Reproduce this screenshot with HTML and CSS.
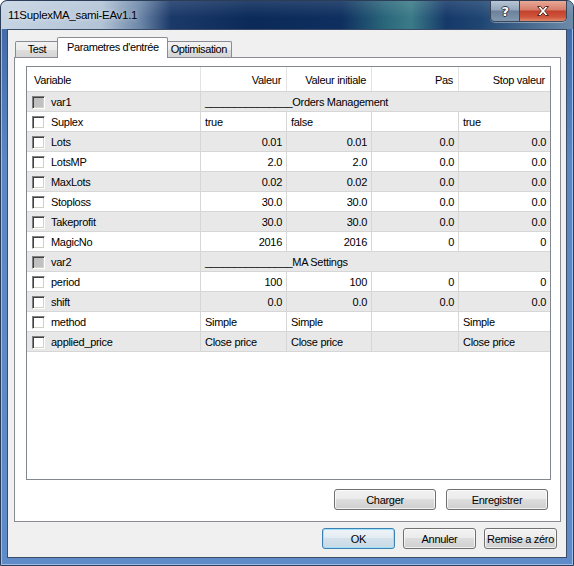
FILE: index.html
```html
<!DOCTYPE html>
<html lang="fr">
<head>
  <meta charset="UTF-8" />
  <meta name="viewport" content="width=device-width, initial-scale=1.0" />
  <title>11SuplexMA_sami-EAv1.1</title>
  <link rel="stylesheet" href="styles.css">
</head>
<body>
  <div class="window">
    <div class="titlebar">
      <span class="title">11SuplexMA_sami-EAv1.1</span>
      <div class="caption">
        <span class="cap help">?</span>
        <span class="cap close">
          <svg width="14" height="12" viewBox="0 0 14 12">
            <path d="M1.5 1.5h3.2l2.3 2.8 2.3-2.8h3.2l-3.8 4.5 3.8 4.5h-3.2l-2.3-2.8-2.3 2.8h-3.2l3.8-4.5z" fill="#fff" stroke="#5a2a24" stroke-width="1" stroke-linejoin="round"/>
          </svg>
        </span>
      </div>
    </div>

    <div class="client">
      <div class="tabs">
        <span class="tab first">Test</span>
        <span class="tab active">Parametres d'entrée</span>
        <span class="tab">Optimisation</span>
      </div>

      <div class="panel">
        <div class="grid">
          <div class="row head">
            <span>Variable</span>
            <span class="num">Valeur</span>
            <span class="num">Valeur initiale</span>
            <span class="num">Pas</span>
            <span class="num">Stop valeur</span>
          </div>
          <div class="row sep">
            <span class="var"><i class="check off"></i>var1</span>
            <span class="wide">_______________Orders Management</span>
          </div>
          <div class="row">
            <span class="var"><i class="check"></i>Suplex</span>
            <span>true</span><span>false</span><span></span><span>true</span>
          </div>
          <div class="row">
            <span class="var"><i class="check"></i>Lots</span>
            <span class="num">0.01</span><span class="num">0.01</span><span class="num">0.0</span><span class="num">0.0</span>
          </div>
          <div class="row">
            <span class="var"><i class="check"></i>LotsMP</span>
            <span class="num">2.0</span><span class="num">2.0</span><span class="num">0.0</span><span class="num">0.0</span>
          </div>
          <div class="row">
            <span class="var"><i class="check"></i>MaxLots</span>
            <span class="num">0.02</span><span class="num">0.02</span><span class="num">0.0</span><span class="num">0.0</span>
          </div>
          <div class="row">
            <span class="var"><i class="check"></i>Stoploss</span>
            <span class="num">30.0</span><span class="num">30.0</span><span class="num">0.0</span><span class="num">0.0</span>
          </div>
          <div class="row">
            <span class="var"><i class="check"></i>Takeprofit</span>
            <span class="num">30.0</span><span class="num">30.0</span><span class="num">0.0</span><span class="num">0.0</span>
          </div>
          <div class="row">
            <span class="var"><i class="check"></i>MagicNo</span>
            <span class="num">2016</span><span class="num">2016</span><span class="num">0</span><span class="num">0</span>
          </div>
          <div class="row sep">
            <span class="var"><i class="check off"></i>var2</span>
            <span class="wide">_______________MA Settings</span>
          </div>
          <div class="row">
            <span class="var"><i class="check"></i>period</span>
            <span class="num">100</span><span class="num">100</span><span class="num">0</span><span class="num">0</span>
          </div>
          <div class="row">
            <span class="var"><i class="check"></i>shift</span>
            <span class="num">0.0</span><span class="num">0.0</span><span class="num">0.0</span><span class="num">0.0</span>
          </div>
          <div class="row">
            <span class="var"><i class="check"></i>method</span>
            <span>Simple</span><span>Simple</span><span></span><span>Simple</span>
          </div>
          <div class="row">
            <span class="var"><i class="check"></i>applied_price</span>
            <span>Close price</span><span>Close price</span><span></span><span>Close price</span>
          </div>
        </div>

        <div class="panel-btns">
          <button>Charger</button>
          <button>Enregistrer</button>
        </div>
      </div>

      <div class="dialog-btns">
        <button class="default">OK</button>
        <button>Annuler</button>
        <button>Remise a zéro</button>
      </div>
    </div>
  </div>
</body>
</html>
```

FILE: styles.css
```css
body {
  margin: 0;
  background: #fff;
  font-family: "Liberation Sans", Arial, sans-serif;
  font-size: 11px;
  letter-spacing: -0.3px;
  color: #000;
}

.window {
  width: 574px;
  height: 566px;
  box-sizing: border-box;
  border: 1px solid #2b3d57;
  border-radius: 7px 7px 0 0;
  background: linear-gradient(#3d67a3, #5b87c5 160px, #5f8bc9);
  box-shadow: inset 1px 0 #9fbde6, inset -1px 0 #9fbde6, inset 0 -1px #9fbde6;
  display: flex;
  flex-direction: column;
  overflow: hidden;
}

.titlebar {
  height: 28px;
  display: flex;
  align-items: flex-start;
  background:
    linear-gradient(rgba(255, 255, 255, 0.12), rgba(255, 255, 255, 0) 60%),
    linear-gradient(90deg, #c6d4e3 0, #b3c4d7 100px, #6a85a7 140px, #1b3969 170px,
      #0b2a5a 250px, #0e2f5f 340px, #2b687b 385px, #3b7b88 410px, #16396a 445px,
      #1f4672 480px, #6e8ba9 572px);
  border-radius: 6px 6px 0 0;
}

.title {
  line-height: 28px;
  padding-left: 7px;
  font-size: 11.5px;
  text-shadow: 0 0 5px rgba(255, 255, 255, 0.8);
}

.caption {
  margin-left: auto;
  margin-right: 6px;
  display: flex;
  height: 20px;
  border: 1px solid #3a4657;
  border-top: none;
  border-radius: 0 0 5px 5px;
  overflow: hidden;
  box-shadow: 0 1px 0 rgba(255, 255, 255, 0.35);
}

.cap {
  display: flex;
  align-items: center;
  justify-content: center;
}

.cap.help {
  width: 28px;
  border-right: 1px solid #3a4657;
  background: linear-gradient(#b8c6d5, #93a6bc 45%, #6b809a 50%, #8298b0);
  color: #fff;
  font-family: "DejaVu Sans", sans-serif;
  font-weight: bold;
  font-size: 13px;
  text-shadow: -1px 0 #2f3a48, 1px 0 #2f3a48, 0 -1px #2f3a48, 0 1px #2f3a48;
}

.cap.close {
  width: 46px;
  background: linear-gradient(#e9a898, #d57d69 45%, #c3402b 50%, #cf553c 80%, #df8a6c);
}

.client {
  flex: 1;
  min-height: 0;
  margin: 0 6px 7px;
  border: 1px solid #3b4c66;
  background: #f0f0f0;
  display: flex;
  flex-direction: column;
  padding: 7px 5px 8px 6px;
}

.tabs {
  display: flex;
  align-items: flex-end;
  height: 21px;
  padding-left: 1px;
  letter-spacing: -0.4px;
}

.tab {
  box-sizing: border-box;
  height: 17px;
  padding: 0 4px;
  line-height: 15px;
  border: 1px solid #898c95;
  border-bottom: none;
  border-radius: 2px 2px 0 0;
  background: linear-gradient(#f2f2f2, #ebebeb 50%, #dedede 50%, #d3d3d3);
  white-space: nowrap;
}

.tab.first {
  min-width: 44px;
  text-align: center;
}

.tab.active {
  height: 21px;
  line-height: 19px;
  padding: 0 8px 0 9px;
  margin: 0 -2px;
  background: #fff;
  position: relative;
  z-index: 1;
}

.panel {
  flex: 1;
  min-height: 0;
  margin-top: -1px;
  border: 1px solid #898c95;
  background: #fff;
  display: flex;
  flex-direction: column;
  padding: 8px 9px 11px 11px;
}

.grid {
  flex: 1;
  border: 1px solid #828790;
  background: #fff;
}

.row {
  display: grid;
  grid-template-columns: 174px 86px 85px 87px 1fr;
  height: 20px;
  box-sizing: border-box;
  border-bottom: 1px solid #d6d6d6;
}

.row:nth-child(even) {
  background: #e8e8e8;
}

.row > span {
  border-right: 1px solid #d6d6d6;
  padding: 1px 4px 0;
  line-height: 18px;
  white-space: nowrap;
  overflow: hidden;
}

.row > span:last-child {
  border-right: none;
}

.row.head {
  height: 25px;
  border-bottom-color: #d5d5d5;
}

.row.head > span {
  padding: 3px 5px 0;
  line-height: 21px;
  border-right-color: #e3e3e3;
}

.row.head > span:first-child {
  padding-left: 7px;
}

.num {
  text-align: right;
}

.row > .var {
  display: flex;
  align-items: center;
  gap: 6px;
  padding-left: 5px;
}

.sep .wide {
  grid-column: 2 / -1;
}

.check {
  width: 13px;
  height: 13px;
  flex: none;
  box-sizing: border-box;
  border: 1px solid;
  border-color: #808080 #fff #fff #808080;
  box-shadow: inset 1px 1px #404040, inset -1px -1px #d4d0c8;
  background: #fff;
}

.check.off {
  background: #c0c0c0;
}

button {
  font: inherit;
  letter-spacing: -0.3px;
  color: #000;
  width: 73px;
  height: 21px;
  padding: 0;
  white-space: nowrap;
  border: 1px solid #707070;
  border-radius: 3px;
  background: linear-gradient(#f2f2f2, #ebebeb 49%, #dddddd 50%, #cfcfcf);
  box-shadow: inset 0 0 0 1px rgba(255, 255, 255, 0.7);
}

button.default {
  border-color: #3c7fb1;
  background: linear-gradient(#eef4f8, #e2ecf2 49%, #d3e1eb 50%, #c9dae6);
  box-shadow: inset 0 0 0 1px #9fe1f8;
}

.panel-btns {
  display: flex;
  justify-content: flex-end;
  gap: 10px;
  margin-top: 9px;
  padding-right: 3px;
}

.panel-btns button {
  width: 102px;
}

.dialog-btns {
  display: flex;
  justify-content: flex-end;
  gap: 8px;
  margin-top: 6px;
  padding-right: 4px;
}
```
